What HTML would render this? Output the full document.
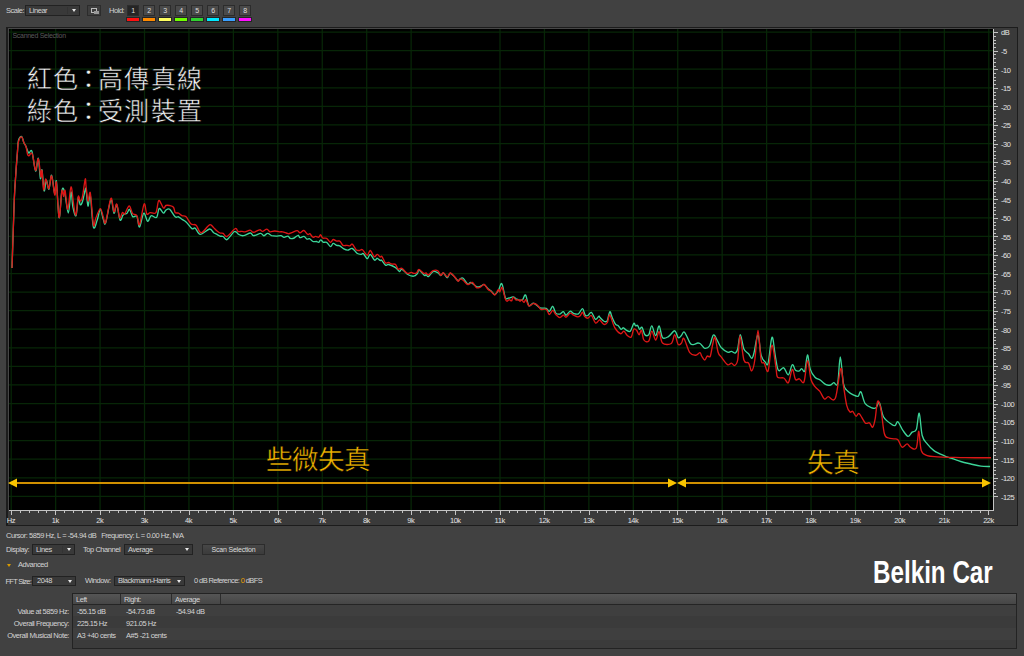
<!DOCTYPE html><html lang="zh-TW"><head><meta charset="utf-8"><style>
*{margin:0;padding:0;box-sizing:border-box}
html,body{width:1024px;height:656px;overflow:hidden;background:#414141;font-family:"Liberation Sans",sans-serif;color:#d8d8d8}
.a{position:absolute;white-space:nowrap}
.t{font-size:7.5px;letter-spacing:-0.45px;line-height:10px;color:#d4d4d4}
.dd{position:absolute;background:#393939;border:1px solid #222}
.dd i{position:absolute;right:3px;top:3px;width:0;height:0;border-left:2.5px solid transparent;border-right:2.5px solid transparent;border-top:3.5px solid #e8e8e8}
.dd s{position:absolute;top:1px;bottom:1px;right:11px;width:1px;background:#333}
.btn{position:absolute;background:#4a4a4a;border:1px solid #2c2c2c;text-align:center;font-size:7px;letter-spacing:-0.2px;line-height:9px;color:#ddd}
</style></head><body>

<div class="a t" style="left:6px;top:6px">Scale:</div>
<div class="dd" style="left:25px;top:5px;width:55px;height:11px"><span class="a t" style="left:3px;top:0px">Linear</span><s></s><i></i></div>
<div class="btn" style="left:87px;top:5px;width:14px;height:11px;background:#3e3e3e"><div class="a" style="left:3px;top:2px;width:6px;height:5px;border:1px solid #bbb"></div><div class="a" style="left:6px;top:5px;width:5px;height:3px;background:#999"></div></div>
<div class="a t" style="left:109px;top:6px">Hold:</div>
<div class="btn" style="left:127px;top:5px;width:12px;height:11px;background:#252525">1</div>
<div class="a" style="left:127px;top:18px;width:12px;height:3px;background:#ff1010;outline:1px solid #262626"></div>
<div class="btn" style="left:143px;top:5px;width:12px;height:11px;background:#4a4a4a">2</div>
<div class="a" style="left:143px;top:18px;width:12px;height:3px;background:#ff8a00;outline:1px solid #262626"></div>
<div class="btn" style="left:159px;top:5px;width:12px;height:11px;background:#4a4a4a">3</div>
<div class="a" style="left:159px;top:18px;width:12px;height:3px;background:#ffff60;outline:1px solid #262626"></div>
<div class="btn" style="left:175px;top:5px;width:12px;height:11px;background:#4a4a4a">4</div>
<div class="a" style="left:175px;top:18px;width:12px;height:3px;background:#70ff00;outline:1px solid #262626"></div>
<div class="btn" style="left:191px;top:5px;width:12px;height:11px;background:#4a4a4a">5</div>
<div class="a" style="left:191px;top:18px;width:12px;height:3px;background:#30d030;outline:1px solid #262626"></div>
<div class="btn" style="left:207px;top:5px;width:12px;height:11px;background:#4a4a4a">6</div>
<div class="a" style="left:207px;top:18px;width:12px;height:3px;background:#00e8ff;outline:1px solid #262626"></div>
<div class="btn" style="left:223px;top:5px;width:12px;height:11px;background:#4a4a4a">7</div>
<div class="a" style="left:223px;top:18px;width:12px;height:3px;background:#3aa0ff;outline:1px solid #262626"></div>
<div class="btn" style="left:239px;top:5px;width:12px;height:11px;background:#4a4a4a">8</div>
<div class="a" style="left:239px;top:18px;width:12px;height:3px;background:#ff10ff;outline:1px solid #262626"></div>
<div class="a" style="left:6px;top:27px;width:1012px;height:499px;background:#3a3a3a;border:1px solid #1c1c1c;border-left-width:2px;border-top-width:1px"></div>
<div class="a" style="left:8px;top:28px;width:985px;height:482px;background:#000;border:1px solid #474747;border-right:none;border-bottom:none"></div>
<svg class="a" style="left:0;top:0" width="1024" height="656" shape-rendering="crispEdges">
<path d="M11.20 29V510 M55.64 29V510 M100.07 29V510 M144.51 29V510 M188.94 29V510 M233.38 29V510 M277.82 29V510 M322.25 29V510 M366.69 29V510 M411.12 29V510 M500.00 29V510 M544.43 29V510 M588.87 29V510 M633.30 29V510 M677.74 29V510 M722.18 29V510 M766.61 29V510 M811.05 29V510 M855.48 29V510 M899.92 29V510 M944.36 29V510 M988.79 29V510 M9 32.10H993 M9 50.67H993 M9 69.24H993 M9 87.81H993 M9 106.38H993 M9 124.95H993 M9 143.52H993 M9 162.09H993 M9 180.66H993 M9 199.23H993 M9 217.80H993 M9 236.37H993 M9 254.94H993 M9 273.51H993 M9 292.08H993 M9 310.65H993 M9 329.22H993 M9 347.79H993 M9 366.36H993 M9 384.93H993 M9 403.50H993 M9 422.07H993 M9 440.64H993 M9 459.21H993 M9 477.78H993 M9 496.35H993" stroke="#072607" stroke-width="1.25" fill="none" shape-rendering="geometricPrecision"/>
<path d="M9 510.5H994 M11.5 510V515 M20.5 510V513 M29.5 510V513 M38.5 510V513 M46.5 510V513 M55.5 510V515 M64.5 510V513 M73.5 510V513 M82.5 510V513 M91.5 510V513 M100.5 510V515 M109.5 510V513 M118.5 510V513 M126.5 510V513 M135.5 510V513 M144.5 510V515 M153.5 510V513 M162.5 510V513 M171.5 510V513 M180.5 510V513 M189.5 510V515 M198.5 510V513 M206.5 510V513 M215.5 510V513 M224.5 510V513 M233.5 510V515 M242.5 510V513 M251.5 510V513 M260.5 510V513 M269.5 510V513 M278.5 510V515 M286.5 510V513 M295.5 510V513 M304.5 510V513 M313.5 510V513 M322.5 510V515 M331.5 510V513 M340.5 510V513 M349.5 510V513 M358.5 510V513 M366.5 510V515 M375.5 510V513 M384.5 510V513 M393.5 510V513 M402.5 510V513 M411.5 510V515 M420.5 510V513 M429.5 510V513 M437.5 510V513 M446.5 510V513 M455.5 510V515 M464.5 510V513 M473.5 510V513 M482.5 510V513 M491.5 510V513 M500.5 510V515 M509.5 510V513 M517.5 510V513 M526.5 510V513 M535.5 510V513 M544.5 510V515 M553.5 510V513 M562.5 510V513 M571.5 510V513 M580.5 510V513 M589.5 510V515 M597.5 510V513 M606.5 510V513 M615.5 510V513 M624.5 510V513 M633.5 510V515 M642.5 510V513 M651.5 510V513 M660.5 510V513 M669.5 510V513 M677.5 510V515 M686.5 510V513 M695.5 510V513 M704.5 510V513 M713.5 510V513 M722.5 510V515 M731.5 510V513 M740.5 510V513 M749.5 510V513 M757.5 510V513 M766.5 510V515 M775.5 510V513 M784.5 510V513 M793.5 510V513 M802.5 510V513 M811.5 510V515 M820.5 510V513 M829.5 510V513 M837.5 510V513 M846.5 510V513 M855.5 510V515 M864.5 510V513 M873.5 510V513 M882.5 510V513 M891.5 510V513 M900.5 510V515 M909.5 510V513 M917.5 510V513 M926.5 510V513 M935.5 510V513 M944.5 510V515 M953.5 510V513 M962.5 510V513 M971.5 510V513 M980.5 510V513 M988.5 510V515 M993.5 29V511 M993 32.5H998 M993 36.5H996 M993 40.5H996 M993 43.5H996 M993 47.5H996 M993 51.5H998 M993 54.5H996 M993 58.5H996 M993 62.5H996 M993 66.5H996 M993 69.5H998 M993 73.5H996 M993 77.5H996 M993 80.5H996 M993 84.5H996 M993 88.5H998 M993 92.5H996 M993 95.5H996 M993 99.5H996 M993 103.5H996 M993 106.5H998 M993 110.5H996 M993 114.5H996 M993 118.5H996 M993 121.5H996 M993 125.5H998 M993 129.5H996 M993 132.5H996 M993 136.5H996 M993 140.5H996 M993 144.5H998 M993 147.5H996 M993 151.5H996 M993 155.5H996 M993 158.5H996 M993 162.5H998 M993 166.5H996 M993 170.5H996 M993 173.5H996 M993 177.5H996 M993 181.5H998 M993 184.5H996 M993 188.5H996 M993 192.5H996 M993 196.5H996 M993 199.5H998 M993 203.5H996 M993 207.5H996 M993 210.5H996 M993 214.5H996 M993 218.5H998 M993 222.5H996 M993 225.5H996 M993 229.5H996 M993 233.5H996 M993 236.5H998 M993 240.5H996 M993 244.5H996 M993 248.5H996 M993 251.5H996 M993 255.5H998 M993 259.5H996 M993 262.5H996 M993 266.5H996 M993 270.5H996 M993 274.5H998 M993 277.5H996 M993 281.5H996 M993 285.5H996 M993 288.5H996 M993 292.5H998 M993 296.5H996 M993 300.5H996 M993 303.5H996 M993 307.5H996 M993 311.5H998 M993 314.5H996 M993 318.5H996 M993 322.5H996 M993 326.5H996 M993 329.5H998 M993 333.5H996 M993 337.5H996 M993 340.5H996 M993 344.5H996 M993 348.5H998 M993 352.5H996 M993 355.5H996 M993 359.5H996 M993 363.5H996 M993 366.5H998 M993 370.5H996 M993 374.5H996 M993 378.5H996 M993 381.5H996 M993 385.5H998 M993 389.5H996 M993 392.5H996 M993 396.5H996 M993 400.5H996 M993 404.5H998 M993 407.5H996 M993 411.5H996 M993 415.5H996 M993 418.5H996 M993 422.5H998 M993 426.5H996 M993 429.5H996 M993 433.5H996 M993 437.5H996 M993 441.5H998 M993 444.5H996 M993 448.5H996 M993 452.5H996 M993 455.5H996 M993 459.5H998 M993 463.5H996 M993 467.5H996 M993 470.5H996 M993 474.5H996 M993 478.5H998 M993 481.5H996 M993 485.5H996 M993 489.5H996 M993 493.5H996 M993 496.5H998" stroke="#c4c4c4" stroke-width="1" fill="none"/>
<path d="M12.0 268.0 C12.4 256.6 13.7 215.2 14.3 199.3 C15.0 183.4 15.4 180.7 15.9 172.7 C16.4 164.7 17.1 156.7 17.5 151.3 C17.9 145.9 17.8 142.6 18.5 140.1 C19.2 137.6 20.8 136.1 21.7 136.6 C22.6 137.1 23.2 141.2 23.9 142.8 C24.6 144.5 25.2 144.8 26.0 146.5 C26.8 148.2 27.7 152.1 28.7 152.9 C29.7 153.7 30.8 148.3 31.9 151.3 C33.0 154.3 34.5 169.8 35.6 171.0 C36.7 172.2 37.5 157.1 38.3 158.3 C39.1 159.6 39.8 176.6 40.4 178.5 C41.0 180.4 41.4 167.9 42.0 170.0 C42.6 172.1 43.4 189.1 44.1 190.8 C44.8 192.5 45.5 180.4 46.3 180.1 C47.1 179.8 48.0 190.0 48.9 189.2 C49.8 188.4 50.6 174.5 51.6 175.3 C52.6 176.1 54.0 193.0 54.8 194.0 C55.6 195.0 55.7 177.2 56.4 181.2 C57.1 185.1 58.2 216.1 59.1 217.7 C60.0 219.3 61.0 194.9 61.9 190.6 C62.8 186.3 63.5 188.3 64.6 192.0 C65.7 195.7 67.2 213.0 68.3 213.0 C69.4 213.0 70.2 193.1 71.0 192.0 C71.8 190.9 72.0 202.7 72.8 206.6 C73.7 210.5 75.1 217.2 76.0 215.7 C76.9 214.2 77.6 199.2 78.3 197.4 C79.0 195.6 79.5 204.0 80.2 204.7 C80.9 205.4 81.7 204.0 82.5 201.5 C83.3 199.0 84.6 191.6 85.2 189.7 C85.8 187.7 85.6 187.3 86.1 190.0 C86.6 192.7 87.3 205.1 88.0 206.0 C88.7 206.9 89.4 192.2 90.3 195.7 C91.2 199.2 92.2 222.9 93.4 227.0 C94.6 231.1 96.1 223.0 97.2 220.1 C98.3 217.2 99.3 209.5 100.3 209.4 C101.3 209.3 102.4 217.0 103.3 219.3 C104.2 221.6 104.3 226.3 105.6 223.1 C106.9 219.9 109.5 201.6 110.9 199.9 C112.3 198.2 113.0 212.4 114.0 213.2 C115.0 214.0 115.7 203.7 116.7 204.8 C117.7 206.0 119.0 218.4 120.1 220.1 C121.2 221.8 121.9 216.2 123.1 215.1 C124.2 213.9 125.9 214.1 127.0 213.2 C128.1 212.2 128.7 208.8 129.6 209.4 C130.5 210.0 131.5 215.5 132.7 216.7 C133.9 217.8 135.8 214.6 136.9 216.3 C138.0 218.0 138.4 227.5 139.5 227.0 C140.6 226.5 142.4 214.2 143.7 213.2 C145.0 212.2 146.4 220.5 147.5 221.2 C148.6 221.9 149.3 218.2 150.0 217.3 C150.7 216.4 150.6 215.6 151.7 215.6 C152.8 215.6 155.4 218.5 156.7 217.3 C157.9 216.1 158.1 209.1 159.2 208.4 C160.3 207.7 162.3 212.8 163.4 213.1 C164.5 213.4 164.9 210.7 165.9 210.1 C166.9 209.5 168.1 208.2 169.7 209.3 C171.2 210.4 173.7 215.6 175.2 216.8 C176.7 218.1 177.4 216.4 178.5 216.8 C179.6 217.2 180.6 218.5 181.9 219.3 C183.2 220.2 184.4 220.4 186.1 221.9 C187.8 223.4 190.4 227.6 191.9 228.6 C193.4 229.6 193.9 227.2 195.3 228.2 C196.7 229.2 197.9 234.3 200.3 234.4 C202.7 234.5 207.3 229.3 209.5 229.0 C211.7 228.7 212.5 231.9 213.7 232.8 C214.9 233.7 215.4 233.6 216.5 234.2 C217.6 234.8 218.9 235.7 220.0 236.1 C221.1 236.5 221.9 235.9 223.1 236.5 C224.3 237.1 225.2 240.4 227.0 239.6 C228.8 238.8 232.4 233.0 234.0 231.8 C235.6 230.6 235.6 231.8 236.4 232.2 C237.2 232.6 237.6 233.9 238.8 234.5 C239.9 235.1 241.4 235.9 243.4 235.7 C245.4 235.4 248.8 233.0 250.5 233.0 C252.2 233.0 251.9 235.6 253.6 235.7 C255.3 235.8 258.9 233.4 260.6 233.4 C262.3 233.4 262.6 235.7 263.8 235.7 C264.9 235.7 266.4 233.4 267.7 233.4 C269.0 233.4 270.2 235.2 271.6 235.7 C273.0 236.1 274.7 236.1 276.2 236.1 C277.8 236.1 279.7 235.5 281.0 235.7 C282.3 235.9 282.8 237.2 284.0 237.3 C285.2 237.4 286.9 235.9 288.0 236.1 C289.1 236.3 289.3 238.1 290.3 238.4 C291.3 238.7 292.9 238.5 294.2 238.0 C295.5 237.5 297.1 235.4 298.1 235.3 C299.1 235.2 299.0 237.4 300.0 237.6 C301.0 237.8 302.7 236.2 303.9 236.4 C305.1 236.7 306.0 238.7 307.0 239.1 C308.0 239.5 308.8 238.3 309.8 238.8 C310.8 239.2 311.8 241.0 312.9 241.5 C314.0 242.0 315.4 241.4 316.4 241.5 C317.4 241.6 318.0 242.6 318.8 242.3 C319.5 242.0 319.9 239.9 320.7 239.9 C321.5 239.9 322.4 241.9 323.4 242.3 C324.4 242.7 325.4 241.6 326.6 242.3 C327.8 243.0 329.4 246.4 330.5 246.6 C331.6 246.8 332.2 243.6 333.2 243.4 C334.2 243.2 335.6 245.0 336.7 245.4 C337.8 245.8 338.6 245.2 339.8 245.8 C341.0 246.4 342.4 248.2 343.8 248.9 C345.1 249.6 346.3 250.2 347.7 250.1 C349.1 250.0 350.8 248.0 352.3 248.5 C353.9 249.0 355.6 252.2 357.0 253.2 C358.4 254.2 359.8 254.3 360.9 254.4 C361.9 254.5 362.2 252.9 363.3 253.6 C364.4 254.3 366.0 258.6 367.2 258.7 C368.4 258.8 369.1 254.2 370.3 254.4 C371.5 254.7 373.4 259.6 374.6 260.2 C375.8 260.8 376.4 258.2 377.3 258.3 C378.2 258.4 379.3 260.2 380.0 260.5 C380.7 260.8 380.7 259.4 381.6 260.2 C382.5 261.0 384.3 264.5 385.5 265.2 C386.7 265.9 386.9 264.1 388.6 264.5 C390.3 264.9 393.8 266.4 395.6 267.6 C397.4 268.8 398.4 271.2 399.5 271.5 C400.6 271.8 400.6 268.7 401.9 269.1 C403.2 269.6 405.4 273.0 407.3 274.2 C409.2 275.4 411.9 276.3 413.6 276.2 C415.3 276.1 416.6 274.4 417.5 273.4 C418.4 272.4 417.8 269.7 419.0 270.0 C420.2 270.3 423.3 274.6 424.5 275.4 C425.7 276.2 425.5 274.4 426.1 274.6 C426.8 274.8 427.2 277.1 428.4 276.6 C429.6 276.1 431.5 272.1 433.1 271.5 C434.7 270.9 436.5 272.0 437.8 272.7 C439.1 273.4 440.0 275.6 440.9 275.6 C441.8 275.6 442.2 272.5 443.3 272.9 C444.4 273.2 446.0 277.6 447.2 277.7 C448.4 277.8 449.0 273.2 450.3 273.2 C451.6 273.2 453.7 276.2 455.0 277.5 C456.3 278.8 457.3 280.6 458.1 280.9 C458.9 281.1 459.2 279.4 460.0 279.0 C460.8 278.6 461.8 277.3 463.1 278.2 C464.4 279.1 466.5 283.4 467.8 284.1 C469.1 284.8 469.4 282.1 470.9 282.5 C472.4 282.9 475.1 286.2 476.8 286.8 C478.5 287.4 479.9 286.4 481.1 286.0 C482.3 285.6 483.0 284.0 484.2 284.5 C485.4 285.0 486.9 287.6 488.1 288.8 C489.3 289.9 490.1 290.1 491.2 291.1 C492.4 292.1 493.6 294.7 494.8 294.6 C496.0 294.5 497.1 292.5 498.3 290.7 C499.5 288.9 500.6 282.5 501.8 283.7 C503.0 284.9 504.2 295.3 505.3 297.7 C506.4 300.1 507.1 298.2 508.4 298.1 C509.7 298.0 511.8 296.8 513.1 296.9 C514.4 297.0 515.2 298.4 516.2 298.9 C517.3 299.4 518.4 300.0 519.4 300.1 C520.4 300.2 521.5 300.6 522.5 299.7 C523.5 298.8 524.6 294.0 525.6 295.0 C526.6 296.0 527.5 304.1 528.8 305.5 C530.0 306.9 531.8 303.3 533.0 303.2 C534.2 303.1 534.8 303.8 536.0 304.6 C537.2 305.4 538.4 307.4 540.1 308.0 C541.8 308.6 544.7 307.7 546.2 308.3 C547.8 308.9 548.2 311.7 549.3 311.4 C550.4 311.1 551.7 306.0 552.8 306.3 C553.8 306.6 554.6 311.8 555.8 313.1 C557.0 314.4 558.6 314.3 559.9 314.1 C561.1 313.9 562.3 311.5 563.3 311.7 C564.3 311.9 565.0 315.3 566.1 315.2 C567.2 315.1 569.0 311.4 570.2 311.1 C571.5 310.8 572.2 313.1 573.6 313.5 C575.0 313.9 576.9 314.6 578.4 313.8 C579.9 313.0 581.4 308.5 582.5 308.7 C583.6 308.9 584.3 314.1 585.2 315.2 C586.1 316.3 586.9 316.0 587.9 315.5 C588.9 315.0 590.1 311.8 591.4 312.4 C592.7 313.0 594.2 318.7 595.5 319.3 C596.8 319.9 598.1 316.5 598.9 316.2 C599.6 315.9 599.1 316.6 600.0 317.5 C600.9 318.4 603.2 321.0 604.4 321.5 C605.6 322.0 606.4 322.1 607.3 320.5 C608.2 318.9 609.0 312.2 609.8 311.7 C610.6 311.2 611.2 315.5 612.2 317.6 C613.2 319.7 614.6 323.1 615.6 324.4 C616.6 325.7 617.1 324.6 618.0 325.4 C618.9 326.2 620.1 328.9 621.0 329.3 C621.9 329.7 622.6 327.7 623.4 327.8 C624.2 327.9 624.8 329.2 625.9 329.8 C627.0 330.4 629.0 332.3 630.3 331.2 C631.6 330.2 632.8 324.3 633.7 323.4 C634.6 322.5 635.0 325.6 635.6 325.9 C636.2 326.2 636.9 324.8 637.6 325.4 C638.3 326.0 638.9 329.0 639.6 329.3 C640.3 329.6 641.1 326.4 642.0 327.3 C642.9 328.2 643.8 333.5 644.9 334.7 C646.0 335.9 647.7 336.2 648.8 334.7 C649.9 333.2 650.6 325.8 651.8 325.9 C652.9 326.0 654.5 335.6 655.7 335.6 C656.9 335.6 658.0 325.6 659.1 325.9 C660.2 326.2 661.0 335.8 662.5 337.6 C664.0 339.4 666.4 337.7 668.4 336.6 C670.4 335.5 673.1 330.6 674.7 330.8 C676.3 331.0 677.1 336.7 678.1 337.6 C679.1 338.5 679.9 337.0 681.0 336.1 C682.1 335.2 683.0 331.0 684.5 332.2 C686.0 333.4 688.7 341.5 690.3 343.5 C691.9 345.5 693.0 344.5 694.2 344.4 C695.4 344.3 696.7 343.1 697.7 343.0 C698.7 342.9 699.3 343.1 700.0 343.5 C700.7 343.9 700.9 344.4 701.7 345.2 C702.5 346.0 703.5 348.2 704.8 348.3 C706.1 348.4 708.1 348.2 709.5 346.0 C710.9 343.8 712.1 335.9 713.4 335.0 C714.7 334.1 716.0 338.4 717.3 340.5 C718.6 342.6 719.5 345.6 721.2 347.5 C723.0 349.4 725.8 351.6 727.5 352.2 C729.2 352.8 730.1 351.3 731.4 351.4 C732.7 351.5 734.2 353.4 735.3 353.0 C736.3 352.6 736.9 352.1 737.7 349.0 C738.5 345.9 739.3 334.7 740.3 334.7 C741.3 334.7 742.5 345.8 743.9 349.0 C745.3 352.2 747.3 352.2 748.6 353.8 C749.9 355.3 750.8 358.5 751.7 358.4 C752.6 358.3 753.0 356.9 754.0 353.0 C755.0 349.1 756.8 334.6 758.0 335.0 C759.2 335.4 759.9 350.9 761.1 355.3 C762.3 359.7 763.8 360.3 765.0 361.6 C766.2 362.9 766.9 367.2 768.1 363.1 C769.3 359.1 770.8 338.6 772.0 337.3 C773.2 336.0 774.2 349.8 775.2 355.3 C776.2 360.8 776.9 368.1 778.3 370.2 C779.7 372.3 782.1 367.0 783.8 367.8 C785.4 368.6 787.0 375.3 788.4 374.8 C789.8 374.3 791.1 365.5 792.3 364.7 C793.5 363.9 794.3 369.2 795.5 370.2 C796.7 371.2 798.4 371.2 799.4 370.9 C800.4 370.6 800.8 368.6 801.7 368.6 C802.6 368.6 803.8 373.2 804.8 370.9 C805.8 368.6 806.6 355.2 807.5 355.0 C808.4 354.8 809.0 365.7 810.3 369.4 C811.5 373.1 813.3 375.4 815.0 377.2 C816.7 379.0 818.7 379.1 820.5 380.3 C822.3 381.6 824.3 383.9 826.0 384.7 C827.7 385.5 829.3 385.3 830.6 385.0 C831.9 384.7 832.6 383.0 833.8 382.7 C834.9 382.4 836.6 387.7 837.7 383.4 C838.8 379.1 839.3 356.9 840.3 356.9 C841.2 356.9 842.3 377.9 843.4 383.5 C844.5 389.1 845.5 388.5 846.7 390.2 C848.0 391.9 849.4 392.6 850.9 393.6 C852.4 394.6 854.8 395.6 856.0 396.0 C857.2 396.4 857.6 396.7 858.4 396.0 C859.2 395.3 859.9 390.6 861.0 391.9 C862.1 393.2 863.4 401.0 865.2 403.6 C867.0 406.2 870.1 407.1 871.9 407.8 C873.7 408.5 874.8 408.6 876.0 407.8 C877.2 407.0 878.1 401.3 879.4 402.8 C880.7 404.3 881.5 413.4 883.6 417.0 C885.7 420.6 890.0 423.2 892.0 424.6 C894.0 426.0 894.3 425.9 895.3 425.4 C896.3 424.9 896.6 420.9 897.9 421.7 C899.2 422.5 901.2 428.0 902.9 430.4 C904.6 432.8 906.5 436.0 908.0 436.3 C909.5 436.6 910.7 433.2 912.1 432.1 C913.5 431.0 915.1 432.7 916.3 429.6 C917.5 426.5 918.2 412.3 919.2 413.3 C920.2 414.3 920.9 430.4 922.2 435.5 C923.5 440.6 925.2 441.4 927.2 443.9 C929.2 446.4 931.1 448.7 933.9 450.6 C936.7 452.6 941.2 454.4 944.0 455.6 C946.8 456.9 947.9 457.1 950.7 458.1 C953.5 459.1 957.4 460.5 960.8 461.5 C964.1 462.5 967.4 463.2 970.8 464.0 C974.1 464.8 977.7 465.8 980.9 466.2 C984.1 466.6 988.6 466.4 990.1 466.5" stroke="#3cd498" stroke-width="1.35" fill="none" stroke-linejoin="round" shape-rendering="geometricPrecision"/>
<path d="M12.0 268.0 C12.4 256.6 13.7 215.2 14.3 199.3 C15.0 183.4 15.4 180.7 15.9 172.7 C16.4 164.7 17.1 156.5 17.5 151.3 C17.9 146.1 17.8 144.1 18.5 141.7 C19.2 139.3 20.8 136.7 21.7 136.9 C22.6 137.1 23.2 141.2 23.9 142.8 C24.6 144.4 25.4 144.6 26.0 146.5 C26.6 148.4 27.1 153.0 27.6 154.5 C28.1 156.0 28.6 155.9 29.2 155.6 C29.8 155.3 30.7 152.8 31.3 152.9 C31.9 153.0 32.2 153.2 32.9 156.1 C33.6 159.0 34.7 170.1 35.6 170.5 C36.5 170.9 37.4 157.7 38.3 158.8 C39.2 159.9 40.3 175.0 40.9 176.9 C41.5 178.8 41.5 168.4 42.0 170.5 C42.5 172.6 43.0 188.3 43.6 189.7 C44.2 191.1 44.8 179.2 45.7 179.0 C46.6 178.8 47.9 189.2 48.9 188.7 C49.9 188.2 50.6 174.8 51.6 175.9 C52.6 177.0 54.0 193.9 54.8 195.0 C55.6 196.1 55.7 178.6 56.4 182.3 C57.1 186.1 58.2 216.1 59.1 217.5 C60.0 218.9 61.1 194.5 61.9 191.0 C62.7 187.5 63.2 196.6 63.7 196.5 C64.2 196.4 64.4 188.5 65.1 190.6 C65.8 192.7 66.8 209.9 67.8 209.3 C68.8 208.7 70.0 187.5 71.0 186.9 C72.0 186.3 73.0 200.9 73.8 205.6 C74.6 210.2 75.2 216.3 76.0 214.8 C76.8 213.3 77.6 198.8 78.3 196.5 C79.0 194.2 79.5 201.1 80.2 201.1 C80.9 201.1 81.7 200.2 82.5 196.5 C83.3 192.8 84.6 180.8 85.2 179.1 C85.8 177.4 85.6 182.8 86.1 186.5 C86.6 190.2 87.3 199.9 88.0 201.0 C88.7 202.1 89.4 189.1 90.3 193.0 C91.2 196.9 92.5 220.4 93.4 224.7 C94.3 229.0 94.6 221.3 95.7 218.6 C96.8 215.9 99.0 208.9 100.3 208.6 C101.6 208.3 102.4 214.7 103.3 217.0 C104.2 219.3 104.3 225.5 105.6 222.4 C106.9 219.3 109.5 200.1 110.9 198.3 C112.3 196.5 113.0 210.8 114.0 211.7 C115.0 212.6 115.8 203.0 116.7 204.0 C117.7 205.0 118.8 216.4 119.7 217.8 C120.7 219.2 121.6 213.1 122.4 212.5 C123.2 211.9 123.6 215.1 124.7 214.0 C125.8 212.9 127.9 206.1 129.2 206.0 C130.5 205.9 131.4 212.0 132.7 213.6 C134.0 215.2 135.8 213.7 136.9 215.5 C138.0 217.3 138.3 226.6 139.5 224.7 C140.7 222.8 142.9 205.8 144.1 204.0 C145.3 202.2 145.8 212.6 146.8 214.0 C147.8 215.4 148.5 212.8 150.0 212.6 C151.5 212.4 154.4 214.6 155.9 212.6 C157.4 210.6 157.6 201.3 158.8 200.5 C160.1 199.7 162.2 207.2 163.4 208.0 C164.6 208.8 164.9 205.9 165.9 205.5 C166.9 205.1 168.0 205.2 169.3 205.5 C170.6 205.8 172.5 206.0 173.5 207.2 C174.5 208.4 174.4 211.6 175.2 212.6 C176.0 213.6 177.4 212.6 178.5 213.1 C179.6 213.6 180.6 215.0 181.9 215.6 C183.2 216.2 184.6 215.4 186.1 216.8 C187.6 218.2 189.4 222.6 191.1 224.0 C192.8 225.4 194.4 223.7 196.1 225.2 C197.8 226.7 199.0 232.9 201.2 232.8 C203.4 232.7 207.4 225.7 209.5 224.8 C211.6 224.0 212.5 226.8 213.7 227.7 C214.9 228.6 215.4 229.6 216.5 230.5 C217.6 231.4 218.9 232.5 220.0 233.0 C221.1 233.5 221.9 232.8 223.1 233.4 C224.3 234.0 225.0 237.3 227.0 236.5 C229.0 235.7 233.4 229.5 235.2 228.7 C237.0 227.8 236.9 230.9 238.0 231.4 C239.1 231.9 240.7 231.3 241.9 231.4 C243.1 231.5 243.6 232.0 245.0 231.8 C246.4 231.6 248.8 230.1 250.1 230.2 C251.4 230.3 252.0 231.9 252.8 232.2 C253.7 232.5 254.0 232.2 255.2 231.8 C256.4 231.4 258.6 229.9 259.8 229.8 C261.0 229.7 261.4 231.5 262.6 231.4 C263.8 231.3 265.7 229.0 266.9 229.1 C268.1 229.2 268.7 231.5 270.0 231.8 C271.3 232.1 273.1 231.0 274.7 231.0 C276.3 231.0 278.1 231.7 279.4 231.8 C280.7 231.9 281.3 231.6 282.5 231.8 C283.7 232.0 285.4 232.7 286.4 233.0 C287.4 233.3 287.8 233.8 288.8 233.8 C289.7 233.7 290.5 233.1 291.9 232.6 C293.3 232.1 295.9 230.5 297.3 230.6 C298.7 230.7 298.9 232.9 300.0 232.9 C301.1 232.9 302.6 230.2 303.9 230.5 C305.2 230.8 306.8 234.0 307.8 234.5 C308.8 235.0 309.0 233.2 309.8 233.7 C310.6 234.1 311.9 236.8 312.9 237.2 C313.9 237.6 314.6 236.4 315.6 236.4 C316.6 236.4 317.9 237.5 318.8 237.2 C319.6 236.9 320.0 234.7 320.7 234.8 C321.4 234.9 321.7 237.4 322.7 238.0 C323.7 238.6 325.3 237.7 326.6 238.4 C327.9 239.1 329.4 242.1 330.5 242.3 C331.6 242.5 332.2 239.7 333.2 239.5 C334.2 239.3 335.6 240.8 336.7 241.1 C337.8 241.4 338.8 240.4 339.8 241.1 C340.9 241.8 341.8 244.7 343.0 245.4 C344.2 246.1 345.7 245.3 346.9 245.4 C348.1 245.5 349.1 246.0 350.0 245.8 C350.9 245.6 351.3 243.5 352.3 244.2 C353.3 244.8 355.1 248.6 356.2 249.7 C357.4 250.8 358.4 250.5 359.4 250.5 C360.4 250.5 361.2 248.9 362.5 249.7 C363.8 250.5 365.9 255.1 367.2 255.2 C368.5 255.3 369.1 250.2 370.3 250.5 C371.5 250.8 373.0 256.1 374.2 256.7 C375.4 257.3 376.3 254.3 377.3 254.4 C378.3 254.5 379.3 256.7 380.0 257.0 C380.7 257.3 381.1 256.0 381.6 256.2 C382.1 256.5 382.5 257.5 383.1 258.6 C383.8 259.7 384.6 262.2 385.5 262.9 C386.4 263.5 387.6 262.3 388.6 262.5 C389.6 262.7 390.5 263.7 391.7 264.0 C392.9 264.3 394.6 263.6 395.6 264.5 C396.7 265.4 396.9 268.5 398.0 269.1 C399.1 269.8 400.3 267.7 401.9 268.4 C403.4 269.1 405.7 272.8 407.3 273.4 C408.9 274.0 410.2 272.3 411.2 272.3 C412.3 272.3 412.7 273.3 413.6 273.4 C414.5 273.5 415.8 273.3 416.7 272.7 C417.6 272.1 417.8 269.4 419.0 269.5 C420.2 269.6 422.6 272.8 423.8 273.4 C424.9 274.0 425.3 272.7 426.1 273.0 C426.9 273.3 427.2 275.4 428.4 275.0 C429.6 274.6 431.5 271.4 433.1 270.7 C434.7 270.0 436.5 269.9 437.8 270.7 C439.1 271.5 440.0 275.1 440.9 275.4 C441.8 275.7 442.2 272.4 443.3 272.7 C444.4 273.0 446.0 276.9 447.2 277.0 C448.4 277.1 449.0 272.9 450.3 273.0 C451.6 273.1 453.7 275.9 455.0 277.3 C456.3 278.7 457.3 281.0 458.1 281.2 C458.9 281.5 459.2 279.1 460.0 278.9 C460.8 278.7 461.8 279.3 463.1 280.2 C464.4 281.1 466.2 284.1 467.8 284.5 C469.4 284.9 471.1 282.0 472.5 282.5 C473.9 283.0 475.1 286.8 476.4 287.6 C477.7 288.4 479.0 287.7 480.3 287.2 C481.6 286.7 482.9 284.1 484.2 284.5 C485.5 284.9 486.9 288.3 488.1 289.5 C489.3 290.7 490.1 290.6 491.2 291.5 C492.4 292.4 493.6 295.3 494.8 295.0 C496.0 294.7 497.5 290.0 498.3 289.5 C499.1 289.0 499.2 292.2 499.8 291.9 C500.4 291.6 501.3 286.4 502.2 287.6 C503.1 288.8 504.5 296.6 505.3 298.9 C506.1 301.2 506.2 301.1 506.9 301.2 C507.5 301.4 508.4 299.8 509.2 299.7 C510.0 299.6 511.0 301.3 511.6 300.9 C512.2 300.5 512.3 297.4 513.1 297.3 C513.9 297.2 515.4 299.7 516.2 300.1 C517.1 300.5 517.5 299.5 518.2 299.7 C518.9 299.9 519.6 301.2 520.2 301.2 C520.8 301.2 521.1 299.5 521.7 299.7 C522.4 299.9 523.4 302.4 524.1 302.4 C524.8 302.4 525.2 299.1 526.0 299.7 C526.8 300.3 527.6 305.2 528.8 305.9 C529.9 306.5 531.8 303.9 533.0 303.6 C534.2 303.3 535.0 303.6 536.0 304.2 C537.0 304.8 538.3 306.1 539.1 307.0 C539.9 307.9 539.6 309.0 540.8 309.4 C542.0 309.8 544.8 308.5 546.2 309.4 C547.7 310.2 548.2 314.3 549.3 314.5 C550.4 314.7 551.7 310.4 552.8 310.4 C553.8 310.4 554.6 313.3 555.8 314.5 C557.0 315.7 558.6 317.5 559.9 317.6 C561.1 317.7 562.3 315.3 563.3 315.2 C564.3 315.1 565.0 317.5 566.1 317.2 C567.2 316.9 569.0 313.4 570.2 313.1 C571.5 312.8 572.4 314.6 573.6 315.2 C574.9 315.8 576.6 316.8 577.7 316.9 C578.8 316.9 579.6 316.3 580.4 315.5 C581.2 314.7 581.8 312.0 582.5 312.1 C583.2 312.2 583.6 315.2 584.5 316.2 C585.4 317.2 586.8 318.3 587.9 318.2 C589.0 318.1 590.1 314.7 591.4 315.5 C592.7 316.3 594.2 322.2 595.5 323.0 C596.8 323.8 598.1 320.8 598.9 320.3 C599.6 319.8 599.2 319.3 600.0 320.0 C600.8 320.7 602.7 324.0 603.9 324.4 C605.1 324.8 606.3 324.1 607.3 322.5 C608.3 320.9 608.6 314.3 609.8 315.1 C611.0 315.9 612.8 324.2 614.6 327.3 C616.4 330.4 619.0 333.0 620.5 333.7 C622.0 334.4 622.8 330.9 623.9 331.2 C625.0 331.6 626.1 334.6 627.3 335.6 C628.5 336.6 630.2 338.2 631.2 337.1 C632.3 336.1 632.8 330.4 633.7 329.3 C634.6 328.2 635.7 329.4 636.6 330.3 C637.5 331.2 638.3 334.7 639.1 334.7 C639.9 334.7 640.7 329.4 641.5 330.3 C642.3 331.2 642.7 338.2 643.9 340.0 C645.1 341.8 647.5 342.5 648.8 341.0 C650.1 339.5 650.6 331.4 651.8 331.2 C652.9 331.1 654.5 339.9 655.7 340.0 C656.9 340.1 658.0 331.2 659.1 331.7 C660.2 332.2 660.5 341.0 662.5 343.0 C664.5 345.0 669.3 344.9 671.3 343.5 C673.3 342.1 673.6 334.6 674.7 334.7 C675.8 334.8 677.0 343.0 678.1 344.4 C679.2 345.8 680.5 344.0 681.5 343.0 C682.5 342.0 682.6 337.0 684.0 338.6 C685.4 340.2 687.8 349.9 689.8 352.7 C691.8 355.5 694.0 355.2 695.7 355.2 C697.4 355.2 699.0 352.5 700.0 352.7 C701.0 352.9 700.9 354.9 701.7 356.1 C702.5 357.3 703.9 360.0 704.8 360.0 C705.7 360.0 706.3 356.8 707.2 356.1 C708.1 355.5 709.4 358.1 710.3 356.1 C711.2 354.2 711.9 347.5 712.7 344.4 C713.5 341.3 714.1 336.0 715.0 337.3 C715.9 338.6 717.1 348.9 718.1 352.2 C719.1 355.5 719.7 354.8 721.2 356.9 C722.8 359.0 725.8 363.7 727.5 364.7 C729.2 365.7 730.2 363.0 731.4 363.1 C732.6 363.2 733.5 366.0 734.5 365.5 C735.5 365.0 736.8 364.9 737.7 360.0 C738.6 355.1 739.0 335.8 740.0 335.8 C741.0 335.8 742.5 355.4 743.9 360.0 C745.3 364.6 747.3 361.3 748.6 363.1 C749.9 364.9 750.7 371.4 751.7 370.9 C752.7 370.4 753.8 366.8 754.8 360.0 C755.8 353.2 757.0 330.3 758.0 330.3 C759.0 330.3 760.1 354.5 761.1 360.0 C762.1 365.5 763.0 361.3 764.2 363.1 C765.4 364.9 766.8 373.9 768.1 370.9 C769.4 367.9 770.7 345.7 772.0 345.2 C773.3 344.7 775.1 362.5 776.0 367.8 C776.9 373.1 776.2 375.5 777.5 377.2 C778.8 378.9 781.9 377.1 783.8 378.0 C785.6 378.9 787.0 384.1 788.4 382.7 C789.8 381.3 791.1 369.9 792.3 369.4 C793.5 368.9 794.3 377.9 795.5 379.5 C796.7 381.1 798.0 378.4 799.4 378.8 C800.8 379.1 802.6 384.9 804.0 381.9 C805.4 378.9 806.3 361.2 807.5 360.8 C808.7 360.4 809.8 375.2 811.0 379.5 C812.2 383.8 813.5 384.6 815.0 386.6 C816.5 388.6 818.1 389.2 819.7 391.2 C821.3 393.3 823.0 398.1 824.4 399.0 C825.8 399.9 826.5 396.8 828.3 396.7 C830.1 396.6 833.2 403.0 835.3 398.3 C837.4 393.6 839.4 370.7 840.8 368.5 C842.1 366.3 842.4 379.1 843.4 385.2 C844.4 391.3 845.6 400.8 846.7 405.3 C847.8 409.8 849.0 411.0 850.0 412.0 C851.0 413.0 851.6 410.5 852.6 411.2 C853.6 411.9 854.9 415.8 856.0 416.2 C857.1 416.6 857.8 412.6 859.3 413.7 C860.8 414.8 863.5 421.4 865.2 422.9 C866.9 424.4 868.1 422.2 869.4 422.9 C870.6 423.6 871.7 427.8 872.7 427.1 C873.7 426.4 874.4 423.0 875.2 418.7 C876.0 414.4 876.7 402.5 877.7 401.1 C878.7 399.7 880.0 404.9 881.1 410.3 C882.2 415.8 883.1 429.2 884.4 433.8 C885.6 438.4 887.0 437.2 888.6 438.0 C890.2 438.8 892.2 438.5 893.7 438.8 C895.2 439.1 896.5 438.3 897.9 439.7 C899.3 441.1 900.5 446.5 902.0 447.2 C903.5 447.9 905.7 443.9 907.1 443.9 C908.5 443.9 908.9 446.5 910.4 447.2 C911.9 447.9 914.9 450.6 916.3 448.0 C917.7 445.4 918.0 430.9 918.8 431.3 C919.6 431.7 919.9 446.6 921.3 450.6 C922.7 454.7 924.5 454.6 927.2 455.6 C929.9 456.6 933.7 456.5 937.3 456.8 C940.9 457.1 944.2 457.2 949.0 457.3 C953.8 457.4 958.8 457.6 965.8 457.7 C972.8 457.8 986.8 457.7 991.0 457.7" stroke="#dc1616" stroke-width="1.35" fill="none" stroke-linejoin="round" shape-rendering="geometricPrecision"/>
<g shape-rendering="geometricPrecision" fill="#f8c400"><path d="M12 483H672M682 483H987" stroke="#d09000" stroke-width="2"/>
<path d="M8 483L17 478.5V487.5Z"/><path d="M677 483L668 478.5V487.5Z"/><path d="M677 483L686 478.5V487.5Z"/><path d="M991 483L982 478.5V487.5Z"/></g>
</svg>
<div class="a t" style="left:-9.1px;top:515.5px;width:40px;text-align:center;color:#e4e4e4">Hz</div>
<div class="a t" style="left:35.3px;top:515.5px;width:40px;text-align:center;color:#e4e4e4">1k</div>
<div class="a t" style="left:79.8px;top:515.5px;width:40px;text-align:center;color:#e4e4e4">2k</div>
<div class="a t" style="left:124.2px;top:515.5px;width:40px;text-align:center;color:#e4e4e4">3k</div>
<div class="a t" style="left:168.6px;top:515.5px;width:40px;text-align:center;color:#e4e4e4">4k</div>
<div class="a t" style="left:213.1px;top:515.5px;width:40px;text-align:center;color:#e4e4e4">5k</div>
<div class="a t" style="left:257.5px;top:515.5px;width:40px;text-align:center;color:#e4e4e4">6k</div>
<div class="a t" style="left:302.0px;top:515.5px;width:40px;text-align:center;color:#e4e4e4">7k</div>
<div class="a t" style="left:346.4px;top:515.5px;width:40px;text-align:center;color:#e4e4e4">8k</div>
<div class="a t" style="left:390.8px;top:515.5px;width:40px;text-align:center;color:#e4e4e4">9k</div>
<div class="a t" style="left:435.3px;top:515.5px;width:40px;text-align:center;color:#e4e4e4">10k</div>
<div class="a t" style="left:479.7px;top:515.5px;width:40px;text-align:center;color:#e4e4e4">11k</div>
<div class="a t" style="left:524.1px;top:515.5px;width:40px;text-align:center;color:#e4e4e4">12k</div>
<div class="a t" style="left:568.6px;top:515.5px;width:40px;text-align:center;color:#e4e4e4">13k</div>
<div class="a t" style="left:613.0px;top:515.5px;width:40px;text-align:center;color:#e4e4e4">14k</div>
<div class="a t" style="left:657.4px;top:515.5px;width:40px;text-align:center;color:#e4e4e4">15k</div>
<div class="a t" style="left:701.9px;top:515.5px;width:40px;text-align:center;color:#e4e4e4">16k</div>
<div class="a t" style="left:746.3px;top:515.5px;width:40px;text-align:center;color:#e4e4e4">17k</div>
<div class="a t" style="left:790.7px;top:515.5px;width:40px;text-align:center;color:#e4e4e4">18k</div>
<div class="a t" style="left:835.2px;top:515.5px;width:40px;text-align:center;color:#e4e4e4">19k</div>
<div class="a t" style="left:879.6px;top:515.5px;width:40px;text-align:center;color:#e4e4e4">20k</div>
<div class="a t" style="left:924.1px;top:515.5px;width:40px;text-align:center;color:#e4e4e4">21k</div>
<div class="a t" style="left:968.5px;top:515.5px;width:40px;text-align:center;color:#e4e4e4">22k</div>
<div class="a t" style="left:1001px;top:28.4px;color:#e4e4e4">dB</div>
<div class="a t" style="left:1001px;top:47.0px;color:#e4e4e4">-5</div>
<div class="a t" style="left:1001px;top:65.5px;color:#e4e4e4">-10</div>
<div class="a t" style="left:1001px;top:84.1px;color:#e4e4e4">-15</div>
<div class="a t" style="left:1001px;top:102.7px;color:#e4e4e4">-20</div>
<div class="a t" style="left:1001px;top:121.2px;color:#e4e4e4">-25</div>
<div class="a t" style="left:1001px;top:139.8px;color:#e4e4e4">-30</div>
<div class="a t" style="left:1001px;top:158.4px;color:#e4e4e4">-35</div>
<div class="a t" style="left:1001px;top:177.0px;color:#e4e4e4">-40</div>
<div class="a t" style="left:1001px;top:195.5px;color:#e4e4e4">-45</div>
<div class="a t" style="left:1001px;top:214.1px;color:#e4e4e4">-50</div>
<div class="a t" style="left:1001px;top:232.7px;color:#e4e4e4">-55</div>
<div class="a t" style="left:1001px;top:251.2px;color:#e4e4e4">-60</div>
<div class="a t" style="left:1001px;top:269.8px;color:#e4e4e4">-65</div>
<div class="a t" style="left:1001px;top:288.4px;color:#e4e4e4">-70</div>
<div class="a t" style="left:1001px;top:307.0px;color:#e4e4e4">-75</div>
<div class="a t" style="left:1001px;top:325.5px;color:#e4e4e4">-80</div>
<div class="a t" style="left:1001px;top:344.1px;color:#e4e4e4">-85</div>
<div class="a t" style="left:1001px;top:362.7px;color:#e4e4e4">-90</div>
<div class="a t" style="left:1001px;top:381.2px;color:#e4e4e4">-95</div>
<div class="a t" style="left:1001px;top:399.8px;color:#e4e4e4">-100</div>
<div class="a t" style="left:1001px;top:418.4px;color:#e4e4e4">-105</div>
<div class="a t" style="left:1001px;top:436.9px;color:#e4e4e4">-110</div>
<div class="a t" style="left:1001px;top:455.5px;color:#e4e4e4">-115</div>
<div class="a t" style="left:1001px;top:474.1px;color:#e4e4e4">-120</div>
<div class="a t" style="left:1001px;top:492.7px;color:#e4e4e4">-125</div>
<div class="a" style="left:12.5px;top:32px;font-size:7px;letter-spacing:-0.3px;line-height:8px;color:#5a5a5a">Scanned Selection</div>
<div class="a" style="left:27px;top:62.5px;font-size:25px;letter-spacing:1.3px;line-height:32.7px;color:#f4f4f4;-webkit-text-stroke:0.5px #000">紅色<span style="margin:0 -4px">：</span>高傳真線<br>綠色<span style="margin:0 -4px">：</span>受測裝置</div>
<div class="a" style="left:266px;top:444.5px;font-size:26.5px;line-height:30px;color:#f0b400;-webkit-text-stroke:0.4px #000">些微失真</div>
<div class="a" style="left:807px;top:447.5px;font-size:26.5px;line-height:30px;color:#f0b400;-webkit-text-stroke:0.4px #000">失真</div>
<div class="a t" style="left:6px;top:530.7px">Cursor: 5859 Hz, L = -54.94 dB &nbsp; Frequency: L = 0.00 Hz, N/A</div>
<div class="a t" style="left:6px;top:545px">Display:</div>
<div class="dd" style="left:32px;top:544px;width:43px;height:11px"><span class="a t" style="left:3px;top:0">Lines</span><s></s><i></i></div>
<div class="a t" style="left:83px;top:545px">Top Channel</div>
<div class="dd" style="left:124px;top:544px;width:69px;height:11px"><span class="a t" style="left:3px;top:0">Average</span><i></i></div>
<div class="btn" style="left:202px;top:544px;width:63px;height:11px;background:linear-gradient(#474747,#3b3b3b)">Scan Selection</div>
<div class="a" style="left:7px;top:564px;width:0;height:0;border-left:2.5px solid transparent;border-right:2.5px solid transparent;border-top:3px solid #d89a00"></div>
<div class="a t" style="left:18px;top:560px">Advanced</div>
<div class="a t" style="left:5.5px;top:576.5px;letter-spacing:-0.75px">FFT Size:</div>
<div class="dd" style="left:32px;top:576px;width:44px;height:10px"><span class="a t" style="left:4px;top:-1px">2048</span><i></i></div>
<div class="a t" style="left:85px;top:576px">Window:</div>
<div class="dd" style="left:114px;top:576px;width:71px;height:10px"><span class="a t" style="left:3px;top:-1px">Blackmann-Harris</span><i></i></div>
<div class="a t" style="left:194px;top:576px;letter-spacing:-0.6px">0 dB Reference: <span style="color:#e8a000">0</span> dBFS</div>
<div class="a" style="left:873px;top:556px;font-size:31px;line-height:34px;font-weight:bold;color:#fff;transform:scaleX(0.781);transform-origin:0 0">Belkin Car</div>
<div class="a" style="left:72px;top:593px;width:945px;height:56px;background:linear-gradient(#3f3f3f 0,#3f3f3f 11px,#3b3b3b 11px,#3b3b3b 23px,#3f3f3f 23px,#3f3f3f 35px,#3b3b3b 35px);border:1px solid #232323;border-top-width:12px;border-top-color:#232323"></div>
<div class="a" style="left:73px;top:594px;width:943px;height:11px;background:linear-gradient(#555,#464646);border-bottom:1px solid #252525"></div>
<div class="a" style="left:120px;top:594px;width:1px;height:10px;background:#2c2c2c"></div>
<div class="a" style="left:171px;top:594px;width:1px;height:10px;background:#2c2c2c"></div>
<div class="a" style="left:220px;top:594px;width:1px;height:10px;background:#2c2c2c"></div>
<div class="a t" style="left:76px;top:595px">Left</div><div class="a t" style="left:124px;top:595px">Right:</div><div class="a t" style="left:175px;top:595px">Average</div>
<div class="a t" style="right:955px;top:607px;text-align:right">Value at 5859 Hz:</div>
<div class="a t" style="right:955px;top:618.5px;text-align:right">Overall Frequency:</div>
<div class="a t" style="right:955px;top:630.5px;text-align:right">Overall Musical Note:</div>
<div class="a t" style="left:77px;top:607px">-55.15 dB</div><div class="a t" style="left:126px;top:607px">-54.73 dB</div><div class="a t" style="left:176px;top:607px">-54.94 dB</div>
<div class="a t" style="left:77px;top:618.5px">225.15 Hz</div><div class="a t" style="left:126px;top:618.5px">921.05 Hz</div>
<div class="a t" style="left:77px;top:630.5px">A3 +40 cents</div><div class="a t" style="left:126px;top:630.5px">A#5 -21 cents</div>
</body></html>
